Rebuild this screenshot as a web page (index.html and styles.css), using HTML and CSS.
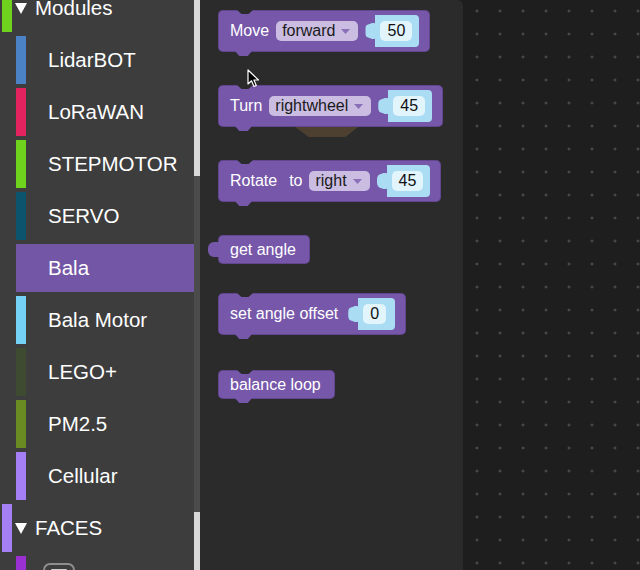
FILE: index.html
```html
<!DOCTYPE html>
<html lang="en">
<head>
<meta charset="utf-8">
<title>Blocks editor</title>
<link rel="stylesheet" href="styles.css">
</head>
<body>
<div class="app">
  <nav class="toolbox">
    <div class="cat-list">
      <div class="cat header"><span class="bar" style="background:#6fd21c"></span><svg class="tri" width="12" height="11" viewBox="0 0 12 11"><polygon points="0,0 12,0 6,11" fill="#fff"/></svg><span class="label">Modules</span></div>
      <div class="cat"><span class="bar" style="background:#4b82c6"></span><span class="label">LidarBOT</span></div>
      <div class="cat"><span class="bar" style="background:#e2235f"></span><span class="label">LoRaWAN</span></div>
      <div class="cat"><span class="bar" style="background:#6fd21c"></span><span class="label">STEPMOTOR</span></div>
      <div class="cat"><span class="bar" style="background:#0c546e"></span><span class="label">SERVO</span></div>
      <div class="cat selected"><span class="bar" style="background:#7356a5"></span><span class="label">Bala</span></div>
      <div class="cat"><span class="bar" style="background:#74d2f6"></span><span class="label">Bala Motor</span></div>
      <div class="cat"><span class="bar" style="background:#3f4b31"></span><span class="label">LEGO+</span></div>
      <div class="cat"><span class="bar" style="background:#6a8b22"></span><span class="label">PM2.5</span></div>
      <div class="cat"><span class="bar" style="background:#a47ff6"></span><span class="label">Cellular</span></div>
      <div class="cat header"><span class="bar" style="background:#a47ff6"></span><svg class="tri" width="12" height="11" viewBox="0 0 12 11"><polygon points="0,0 12,0 6,11" fill="#fff"/></svg><span class="label">FACES</span></div>
      <div class="cat"><span class="bar" style="background:#9a30d1"></span><svg class="face-icon" width="34" height="26" viewBox="0 0 34 26"><rect x="2" y="1" width="30" height="22" rx="6" fill="none" stroke="#8e8e8e" stroke-width="2"/><rect x="9" y="6" width="16" height="3" rx="1" fill="#d0d0d0"/></svg></div>
    </div>
  </nav>
  <div class="scrollbar"><div class="thumb top"></div><div class="track"></div><div class="thumb bottom"></div></div>
  <section class="flyout">
    <div class="block stmt gap-a">
      <span>Move</span>
      <span class="dropdown">forward<svg class="arrow" width="9" height="5" viewBox="0 0 9 5"><polygon points="0,0 9,0 4.5,5" fill="#8a70b6"/></svg></span>
      <span class="socket"><span class="field">50</span></span>
    </div>
    <div class="block stmt gap-a">
      <span class="ghost"></span>
      <span>Turn</span>
      <span class="dropdown">rightwheel<svg class="arrow" width="9" height="5" viewBox="0 0 9 5"><polygon points="0,0 9,0 4.5,5" fill="#8a70b6"/></svg></span>
      <span class="socket"><span class="field">45</span></span>
    </div>
    <div class="block stmt gap-a">
      <span>Rotate</span>
      <span class="word-to">to</span>
      <span class="dropdown">right<svg class="arrow" width="9" height="5" viewBox="0 0 9 5"><polygon points="0,0 9,0 4.5,5" fill="#8a70b6"/></svg></span>
      <span class="socket"><span class="field">45</span></span>
    </div>
    <div class="block reporter gap-b">
      <span>get angle</span>
    </div>
    <div class="block stmt gap-c">
      <span>set angle offset</span>
      <span class="socket wide-gap"><span class="field">0</span></span>
    </div>
    <div class="block stmt small">
      <span>balance loop</span>
    </div>
    <svg class="cursor" width="13" height="19" viewBox="0 0 13 19"><path d="M1 1 L1 15 L4.5 11.8 L7 17.5 L9.3 16.5 L6.9 11 L11.5 11 Z" fill="#000" stroke="#fff" stroke-width="1.2" stroke-linejoin="round"/></svg>
  </section>
  <main class="workspace"></main>
</div>
</body>
</html>
```
FILE: styles.css
```css
* { box-sizing: border-box; }
html, body {
  margin: 0;
  padding: 0;
  background: #1f1f1f;
}
body {
  font-family: "Liberation Sans", Arial, sans-serif;
  overflow: hidden;
}
.app {
  display: flex;
  width: 640px;
  height: 570px;
  overflow: hidden;
}

/* toolbox */
.toolbox {
  width: 194px;
  flex: none;
  background: #3d3d3d;
  overflow: hidden;
}
.cat-list {
  display: flex;
  flex-direction: column;
  gap: 4px;
  margin-top: -16px;
}
.cat {
  height: 48px;
  flex: none;
  display: flex;
  align-items: center;
  color: #fff;
  font-size: 20.5px;
  margin-left: 16px;
}
.cat .bar {
  width: 10px;
  height: 48px;
  flex: none;
}
.cat .label {
  margin-left: 22px;
  white-space: nowrap;
}
.cat.header {
  margin-left: 2px;
}
.cat.header .tri {
  margin-left: 3px;
  flex: none;
}
.cat.header .label {
  margin-left: 8px;
}
.cat.selected {
  background: #7356a5;
}
.face-icon {
  margin-left: 16px;
  align-self: flex-start;
  margin-top: 7px;
  flex: none;
}

/* scrollbar strip */
.scrollbar {
  width: 6px;
  flex: none;
  display: flex;
  flex-direction: column;
}
.scrollbar .thumb.top { height: 176px; background: #d8d8d8; }
.scrollbar .track { flex: 1; background: #4b4b4b; }
.scrollbar .thumb.bottom { height: 58px; background: #d8d8d8; }

/* flyout */
.flyout {
  position: relative;
  width: 263px;
  flex: none;
  background: #2b2b2b;
  border-top-right-radius: 6px;
  padding: 10px 0 0 18px;
  display: flex;
  flex-direction: column;
  align-items: flex-start;
}
.block {
  position: relative;
  display: flex;
  align-items: center;
  gap: 6px;
  height: 42px;
  padding: 0 11px 0 12px;
  background: #7657a9;
  border-radius: 5px;
  color: #fff;
  font-size: 16px;
  white-space: nowrap;
  box-shadow: inset 0 0 0 1px rgba(40, 20, 70, 0.25);
}
.block.small,
.block.reporter {
  height: 29px;
  padding-right: 14px;
}
.block.stmt::before {
  content: "";
  position: absolute;
  top: 0;
  left: 19px;
  width: 16px;
  height: 4px;
  background: #2b2b2b;
  clip-path: polygon(0 0, 100% 0, 72% 100%, 28% 100%);
}
.block.stmt::after {
  content: "";
  position: absolute;
  bottom: -4px;
  left: 17px;
  width: 17px;
  height: 5px;
  background: #7657a9;
  clip-path: polygon(0 0, 100% 0, 75% 100%, 25% 100%);
}
.block.reporter::before {
  content: "";
  position: absolute;
  left: -10px;
  top: 7px;
  width: 11px;
  height: 15px;
  background: #7657a9;
  border-radius: 6px 0 0 6px;
}
.gap-a { margin-bottom: 33px; }
.gap-b { margin-bottom: 29px; }
.gap-c { margin-bottom: 35px; }

.word-to { margin-left: 6px; }

.dropdown {
  display: flex;
  align-items: center;
  gap: 6px;
  height: 20px;
  padding: 0 8px 0 6px;
  border-radius: 5px;
  background: #cbbde2;
  color: #1a1a1a;
  margin-left: 1px;
}
.dropdown .arrow { flex: none; }

.socket {
  position: relative;
  display: flex;
  align-items: center;
  height: 32px;
  padding: 0 7px 0 5px;
  margin-left: 11px;
  background: #aadcf3;
  border-radius: 0 4px 4px 0;
}
.socket.wide-gap { margin-left: 14px; padding-right: 9px; }
.socket::before {
  content: "";
  position: absolute;
  left: -10px;
  top: 8px;
  width: 11px;
  height: 16px;
  background: #aadcf3;
  border-radius: 6px 2px 2px 6px;
  clip-path: polygon(0 15%, 60% 0, 100% 0, 100% 100%, 60% 100%, 0 85%);
}
.field {
  height: 20px;
  line-height: 20px;
  padding: 0 7px;
  border-radius: 5px;
  background: #e2f4fc;
  color: #111;
}
.ghost {
  position: absolute;
  left: 77px;
  top: 42px;
  width: 63px;
  height: 10px;
  background: #4d4030;
  clip-path: polygon(0 0, 100% 0, 80% 100%, 22% 100%);
}
.cursor {
  position: absolute;
  left: 47px;
  top: 69px;
}

/* workspace */
.workspace {
  flex: 1;
  background-color: #1e1e1e;
  background-image: radial-gradient(circle, #5e5e5e 0.9px, transparent 1.4px);
  background-size: 23px 23px;
  background-position: 2.5px -0.5px;
}
```
